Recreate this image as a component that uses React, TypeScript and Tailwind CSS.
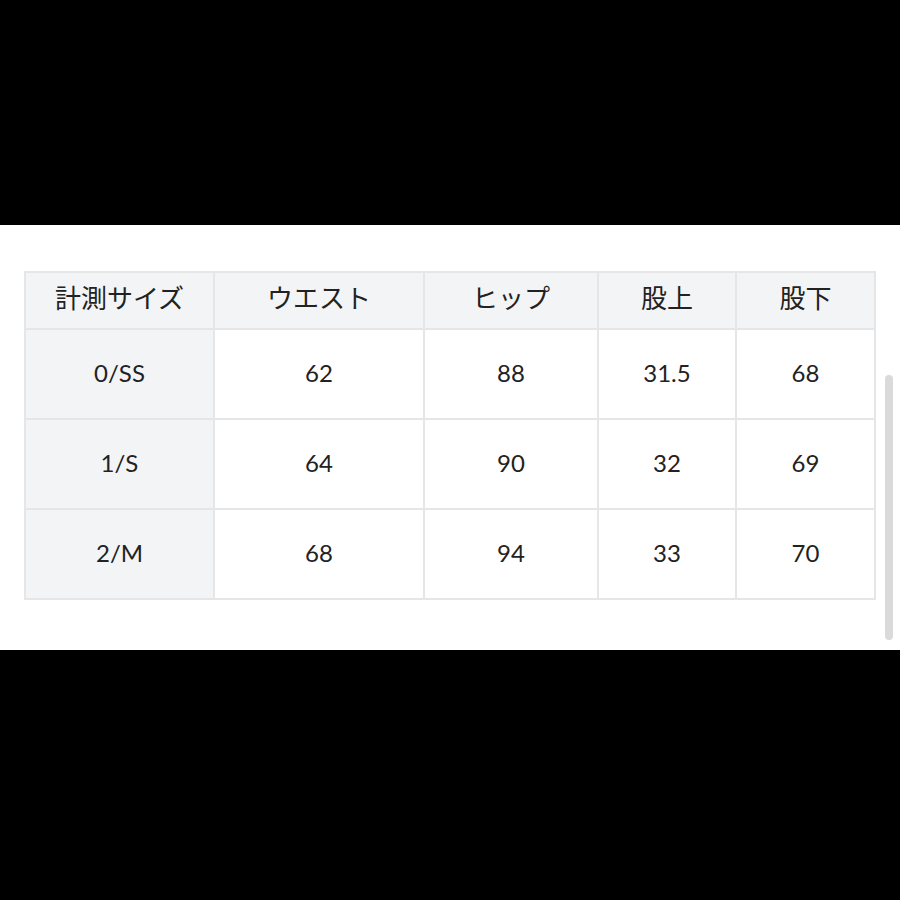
const headers = ['計測サイズ', 'ウエスト', 'ヒップ', '股上', '股下'];
const widths = ['w-[189px]', 'w-[210px]', 'w-[174px]', 'w-[138px]', 'w-[139px]'];
const rows = [
  ['0/SS', '62', '88', '31.5', '68'],
  ['1/S', '64', '90', '32', '69'],
  ['2/M', '68', '94', '33', '70'],
];

export default function App() {
  return (
    <div className="flex h-[900px] w-[900px] flex-col bg-black font-['Lato','Noto_Sans_CJK_JP',sans-serif] text-[#222]">
      <div className="h-[225px] shrink-0" />
      <section className="relative h-[425px] shrink-0 bg-white pl-[24px] pt-[46px]">
        <table className="table-fixed border-collapse text-[24px]">
          <thead>
            <tr className="h-[57px]">
              {headers.map((h, i) => (
                <th key={h} className={`${widths[i]} border-2 border-[#e6e6e6] bg-[#f3f4f6] pb-[5px] text-center text-[26px] font-normal`}>
                  {h}
                </th>
              ))}
            </tr>
          </thead>
          <tbody>
            {rows.map((row) => (
              <tr key={row[0]} className="h-[90px]">
                {row.map((cell, i) => (
                  <td key={i} className={`border-2 border-[#e6e6e6] pb-[3px] text-center ${i === 0 ? 'bg-[#f3f4f6]' : 'bg-white'}`}>
                    {cell}
                  </td>
                ))}
              </tr>
            ))}
          </tbody>
        </table>
        <div className="absolute left-[885px] top-[150px] h-[265px] w-[8px] rounded-full bg-[#dadada]" />
      </section>
      <div className="flex-1" />
    </div>
  );
}
